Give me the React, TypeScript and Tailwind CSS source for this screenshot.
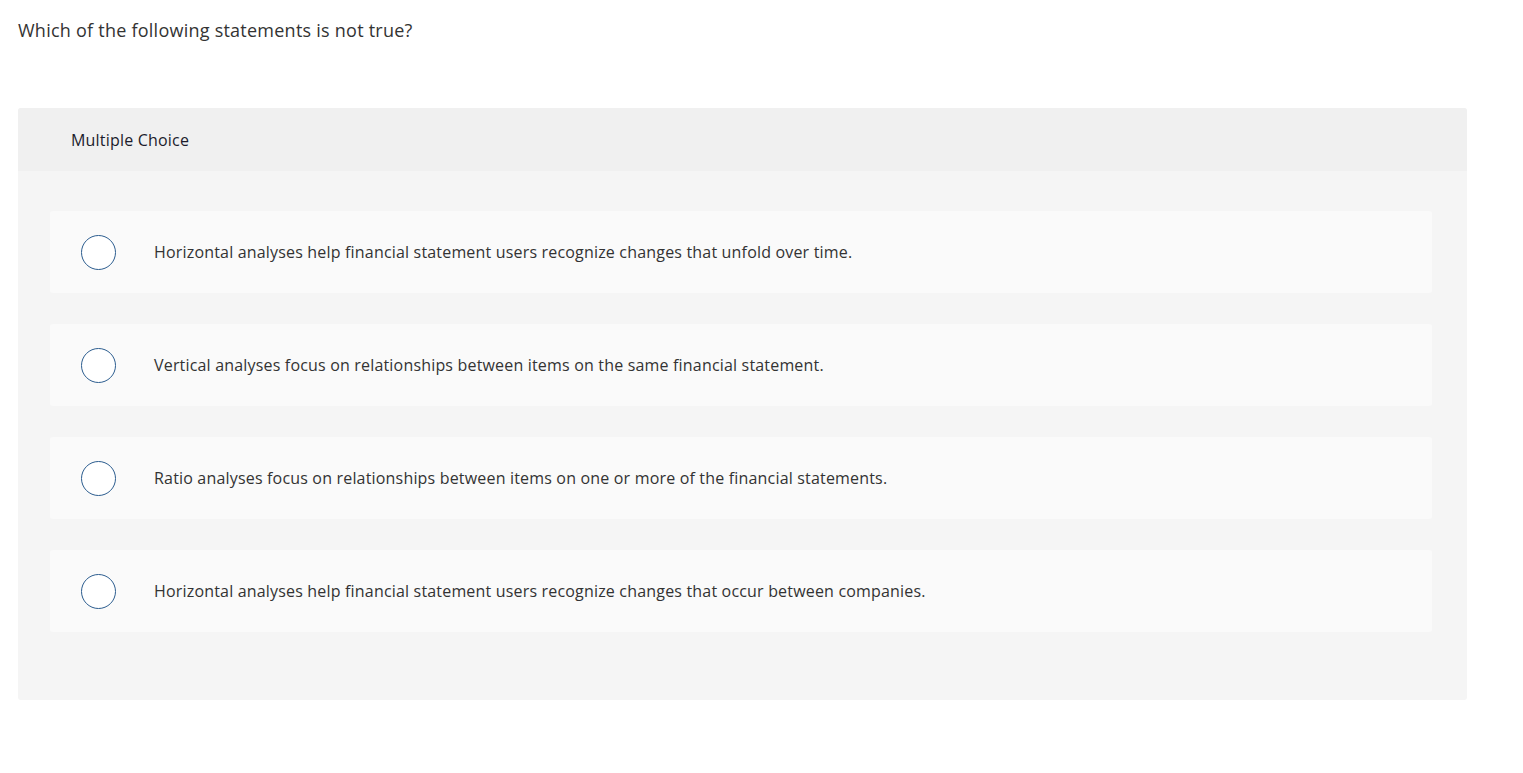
const options = [
  "Horizontal analyses help financial statement users recognize changes that unfold over time.",
  "Vertical analyses focus on relationships between items on the same financial statement.",
  "Ratio analyses focus on relationships between items on one or more of the financial statements.",
  "Horizontal analyses help financial statement users recognize changes that occur between companies.",
];

export default function App() {
  return (
    <div className="min-h-screen bg-white font-['Open_Sans',sans-serif] text-[#333]">
      <div className="pl-[18px] pr-[56px] pt-[18px]">
        <h1 className="text-[18px] leading-6 tracking-[0.24px] text-[#333]">
          Which of the following statements is not true?
        </h1>
        <div className="mt-[66px] rounded-[3px] bg-[#f5f5f5] pb-[68px]">
          <div className="flex h-[63px] items-center rounded-t-[3px] bg-[#f0f0f0] pl-[53px] text-[16px] tracking-[0.2px] text-[#1c1c2c]">
            Multiple Choice
          </div>
          <div className="flex flex-col gap-[31px] pl-[32px] pr-[35px] pt-[40px]">
            {options.map((text) => (
              <label
                key={text}
                className="flex h-[82px] items-center rounded-[3px] bg-[#fafafa] pl-[31px]"
              >
                <span className="h-[35px] w-[35px] shrink-0 rounded-full border-[1.5px] border-[#2c5d8f] bg-white" />
                <span className="ml-[38px] text-[16px] tracking-[0.18px] text-[#333]">{text}</span>
              </label>
            ))}
          </div>
        </div>
      </div>
    </div>
  );
}
